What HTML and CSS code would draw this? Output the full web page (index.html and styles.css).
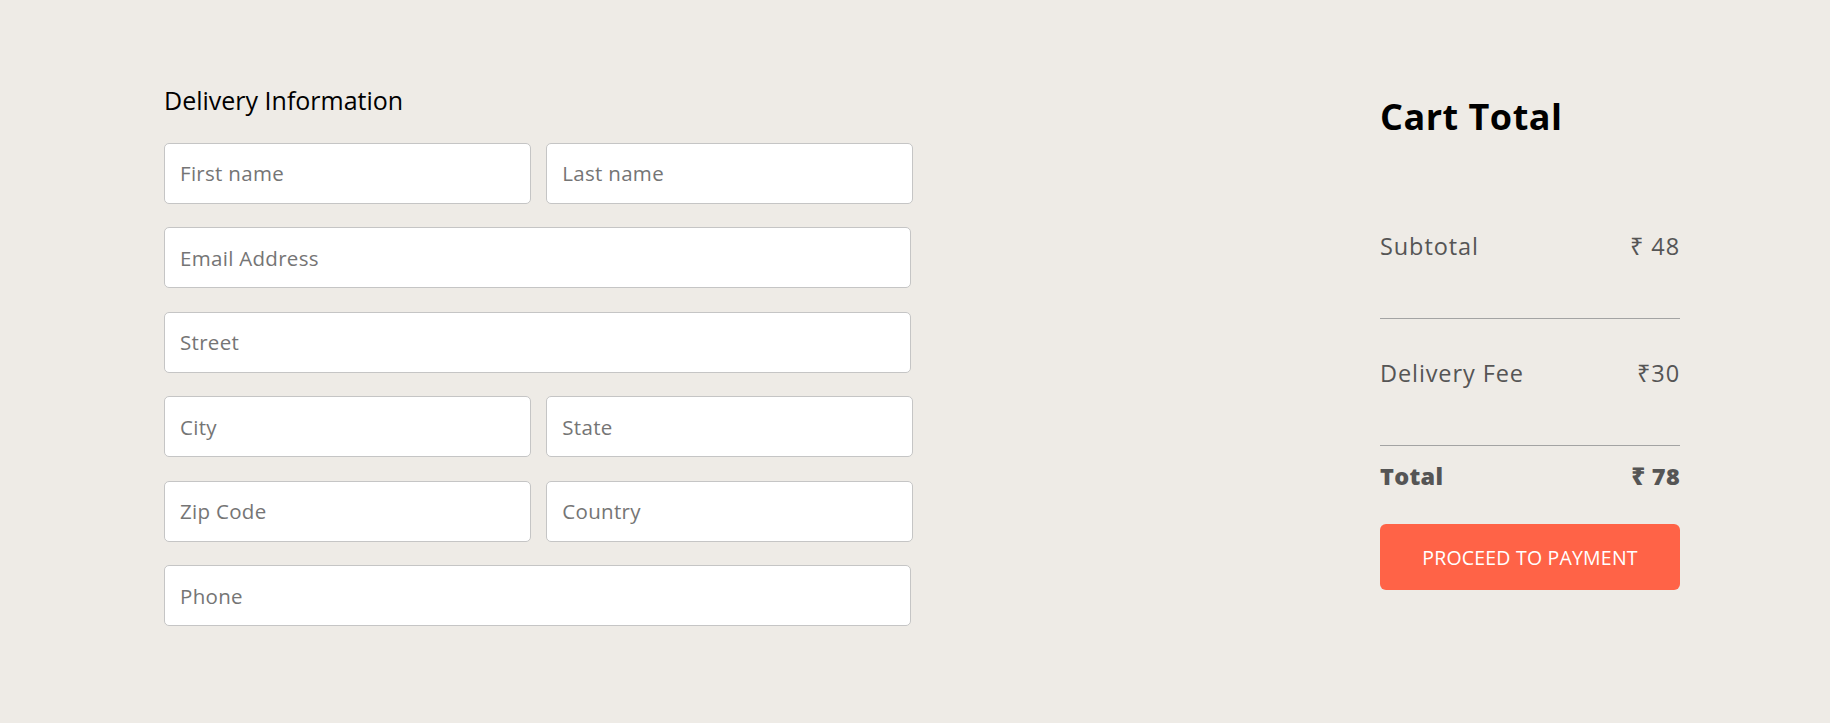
FILE: index.html
```html
<!DOCTYPE html>
<html lang="en">
<head>
<meta charset="utf-8">
<title>Place Order</title>
<link rel="stylesheet" href="styles.css">
</head>
<body>
<form class="place-order">
  <div class="order-left">
    <p class="title">Delivery Information</p>
    <div class="fields">
      <div class="multi-fields">
        <input type="text" placeholder="First name">
        <input type="text" placeholder="Last name">
      </div>
      <input class="single" type="email" placeholder="Email Address">
      <input class="single" type="text" placeholder="Street">
      <div class="multi-fields">
        <input type="text" placeholder="City">
        <input type="text" placeholder="State">
      </div>
      <div class="multi-fields">
        <input type="text" placeholder="Zip Code">
        <input type="text" placeholder="Country">
      </div>
      <input class="single" type="text" placeholder="Phone">
    </div>
  </div>
  <div class="order-right">
    <h2 class="cart-title">Cart Total</h2>
    <div class="cart-details">
      <div class="detail-row"><p>Subtotal</p><p>₹ 48</p></div>
      <hr class="rule">
      <div class="detail-row"><p>Delivery Fee</p><p>₹30</p></div>
      <hr class="rule">
      <div class="detail-row total"><b>Total</b><b>₹ 78</b></div>
    </div>
    <button type="button" class="pay-btn">PROCEED TO PAYMENT</button>
  </div>
</form>
</body>
</html>
```
FILE: styles.css
```css
* {
  box-sizing: border-box;
}

body {
  margin: 0;
  background: #eeebe6;
  font-family: "Open Sans", "Noto Sans", sans-serif;
}

.place-order {
  display: flex;
  justify-content: space-between;
  align-items: flex-start;
  padding: 85px 150px 0 164px;
}

.order-left {
  width: 749px;
}

.title {
  margin: 0 0 26.5px;
  font-size: 25px;
  line-height: 31px;
  font-weight: 400;
  color: #000;
}

.fields {
  display: flex;
  flex-direction: column;
  gap: 23.5px;
}

.multi-fields {
  display: flex;
  gap: 15.6px;
}

.multi-fields input {
  flex: 1;
  min-width: 0;
}

input {
  height: 61px;
  padding: 0 15px;
  border: 1px solid #c5c5c5;
  border-radius: 5px;
  background: #fff;
  font-family: inherit;
  font-size: 20.5px;
  letter-spacing: 0.3px;
  color: #333;
  outline-color: tomato;
}

input.single {
  width: 747px;
}

input::placeholder {
  color: #757575;
}

.order-right {
  width: 300px;
  margin-top: 12px;
}

.cart-title {
  margin: 0;
  font-size: 36px;
  line-height: 40px;
  font-weight: 700;
  letter-spacing: 0.5px;
  color: #000;
}

.cart-details {
  margin-top: 93px;
  color: #555;
}

.detail-row {
  display: flex;
  justify-content: space-between;
  font-size: 23.5px;
  line-height: 33px;
  letter-spacing: 0.9px;
}

.detail-row p,
.detail-row b {
  margin: 0;
}

.detail-row.total {
  font-weight: 700;
  letter-spacing: 0.3px;
}

.rule {
  margin: 55px 0 38px;
  border: 0;
  border-top: 1px solid #a3a3a3;
  height: 0;
}

.rule + .total {
  margin-top: -24px;
}

.pay-btn {
  display: block;
  width: 300px;
  height: 66px;
  margin-top: 31px;
  border: 0;
  border-radius: 6px;
  background: #ff6347;
  color: #fff;
  font-family: inherit;
  font-size: 19.5px;
  letter-spacing: 0.2px;
  cursor: pointer;
}
```
